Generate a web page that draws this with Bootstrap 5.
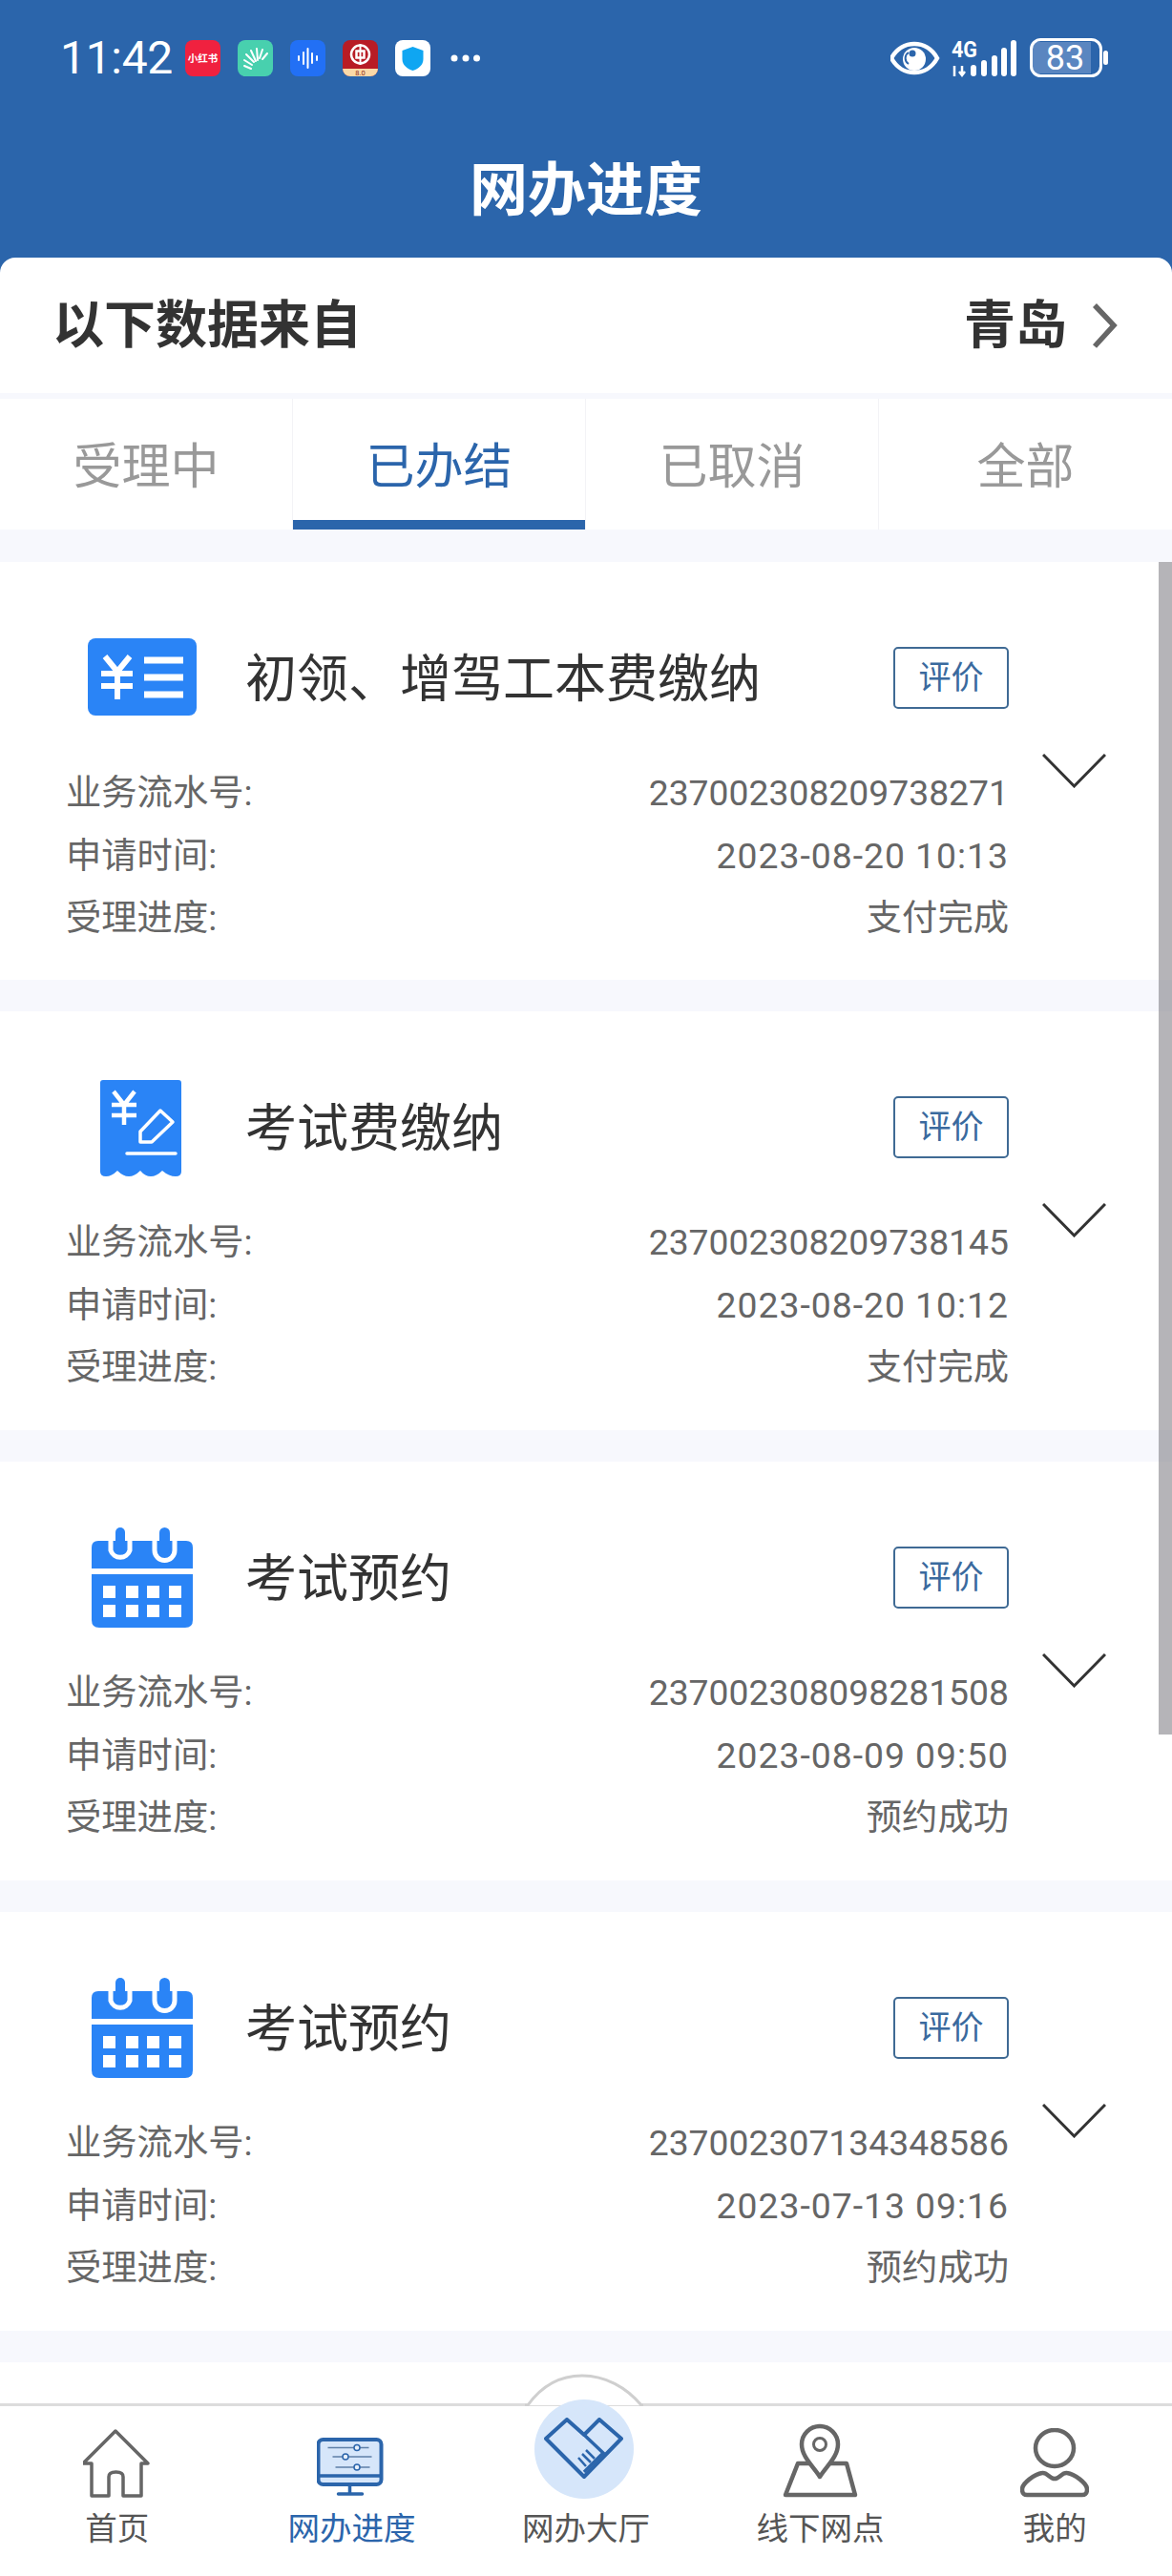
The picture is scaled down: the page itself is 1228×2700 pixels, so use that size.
<!DOCTYPE html>
<html lang="zh-CN">
  <head>
    <meta charset="UTF-8" />
    <meta name="viewport" content="width=device-width, initial-scale=1.0" />
    <title>网办进度</title>
    <link href="https://cdn.jsdelivr.net/npm/bootstrap@5.3.0/dist/css/bootstrap.min.css" rel="stylesheet" />
    <style>
      body {
        font-family: Roboto, "Noto Sans CJK SC", sans-serif;
        background-color: #f7f8fd;
        overflow: hidden;
      }

      .page-wrap { height: 2700px; overflow: hidden; }

      /* Header */
      .top-head { height: 270px; background-color: #2b65ab; color: #fff; }
      .status-row { height: 42px; padding: 0 67px 0 63px; margin-top: 40px; }
      .status-time { width: 131px; font-size: 48px; line-height: 42px; letter-spacing: -0.3px; }
      .app-gap { gap: 18px; }
      .more-dots { margin-left: 21px; }
      .page-title { font-size: 61px; line-height: 84px; font-weight: 700; margin-top: 76px; }

      /* Region bar */
      .region-back { background-color: #2b65ab; }
      .region-bar {
        height: 142px;
        padding: 0 56px 0 55px;
        background-color: #fff;
        border-radius: 16px 16px 0 0;
        font-size: 54px;
        font-weight: 700;
        color: #333;
      }

      /* Tabs */
      .state-tabs { margin-top: 6px; height: 137px; background-color: #fff; }
      .state-tabs .nav-item { width: 25%; border-right: 1px solid #f3f3f6; }
      .state-tabs .nav-item:last-child { border-right: 0; }
      .state-tabs .nav-link {
        height: 137px;
        padding: 0;
        font-size: 51px;
        line-height: 143px;
        color: #999;
        border-bottom: 10px solid transparent;
        border-radius: 0;
      }
      .state-tabs .nav-link.active { color: #2b65ab; border-bottom-color: #2b65ab; }

      /* Record list */
      .record-list { margin-top: 34px; min-height: 0; }
      .record-box { height: 439px; margin-bottom: 33px; padding-left: 69px; background-color: #fff; }
      .record-box:first-child { height: 438px; }
      .record-main { width: 988px; }
      .record-head { height: 146px; margin-top: 48px; margin-left: 11px; margin-bottom: 16px; }
      .record-head svg { flex: none; align-self: flex-start; }
      .record-title { margin-left: 37px; padding-top: 6px; font-size: 54px; line-height: 70px; color: #333; }
      .rate-btn {
        width: 121px;
        height: 65px;
        padding: 0;
        font-size: 34px;
        line-height: 60px;
        color: #3a6a9e;
        background: #fff;
        border: 2px solid #3f6a94;
        border-radius: 5px;
      }
      .info-row { height: 65.5px; font-size: 37.3px; line-height: 65.5px; color: #666; }
      .info-time { letter-spacing: 1px; }
      .fold-arrow { margin: 201px 0 0 35px; }
      .scroll-thumb {
        position: absolute;
        top: 0;
        right: 0;
        width: 14px;
        height: 1229px;
        background-color: rgba(107, 105, 113, 0.5);
      }

      /* Bottom nav */
      .foot-nav { height: 181px; background-color: #fff; border-top: 3px solid #dcdcdc; }
      .foot-item { width: 20%; padding-top: 18px; font-size: 33.5px; line-height: 42px; color: #555; }
      .foot-item.current { color: #2b65ab; }
      .foot-icon { height: 78px; margin-bottom: 12px; }
      .foot-arc { position: absolute; left: 59px; top: -34px; }
      .foot-disc {
        position: absolute;
        left: 69px;
        top: -7px;
        width: 104px;
        height: 104px;
        border-radius: 50%;
        background-color: #d6e6fa;
      }
    </style>
  </head>

  <body>
    <div class="page-wrap d-flex flex-column">
      <!-- Header -->
      <header class="top-head flex-shrink-0">
        <div class="status-row d-flex align-items-center">
          <div class="status-time">11:42</div>
          <div class="d-flex align-items-center app-gap">
            <svg width="37" height="38" viewBox="0 0 37 38">
              <rect width="37" height="38" rx="8" fill="#f0213f" />
              <text x="18.500" y="23" text-anchor="middle" font-size="10.500" font-weight="700" fill="#fff">小红书</text>
            </svg>
            <svg width="37" height="38" viewBox="0 0 37 38">
              <rect width="37" height="38" rx="8" fill="#48d0ae" />
              <g stroke="#fff" stroke-width="2" stroke-linecap="round">
                <path d="M7 27l7 3M7 21l8 5M9 15l8 8M14 11l5 11M20 9l1 12M26 10l-3 9M31 14l-5 6" />
              </g>
            </svg>
            <svg width="37" height="38" viewBox="0 0 37 38">
              <rect width="37" height="38" rx="8" fill="#2270f5" />
              <g stroke="#fff" stroke-width="2" stroke-linecap="round">
                <path d="M9 17v4M14 13v12M18.500 9v20M23 14v10M28 17v4" />
              </g>
            </svg>
            <svg width="37" height="38" viewBox="0 0 37 38">
              <rect width="37" height="38" rx="8" fill="#b81c25" />
              <path d="M0 30h37v0a8 8 0 0 1-8 8H8a8 8 0 0 1-8-8z" fill="#fbd9a8" />
              <circle cx="18.500" cy="15" r="9.500" fill="none" stroke="#fff" stroke-width="2.500" />
              <rect x="14.500" y="11.500" width="8" height="7" fill="none" stroke="#fff" stroke-width="2.500" />
              <path d="M18.500 4v22" stroke="#fff" stroke-width="2" />
              <text x="18.500" y="36.500" text-anchor="middle" font-size="7.500" fill="#8a2a12">8.0</text>
            </svg>
            <svg width="37" height="38" viewBox="0 0 37 38">
              <rect width="37" height="38" rx="8" fill="#fff" />
              <path d="M18.500 7l11 4v9c0 6-5 10-11 12-6-2-11-6-11-12v-9z" fill="#0fa6f2" />
            </svg>
          </div>
          <svg class="more-dots" width="32" height="10" viewBox="0 0 32 10">
            <circle cx="4" cy="5" r="3.500" fill="#fff" />
            <circle cx="16" cy="5" r="3.500" fill="#fff" />
            <circle cx="27.500" cy="5" r="3.500" fill="#fff" />
          </svg>
          <svg class="ms-auto" width="228" height="42" viewBox="933 40 228 42">
            <path d="M934 61C945 41 971 41 982 61 971 81 945 81 934 61Z" fill="none" stroke="#fff" stroke-width="4.500" />
            <circle cx="958" cy="62" r="12" fill="#fff" />
            <path d="M952 55a7 7 0 0 0 0 12" fill="none" stroke="#2b65ab" stroke-width="2" />
            <circle cx="956" cy="56" r="3.500" fill="#2b65ab" />
            <text x="997" y="60" font-size="24" font-weight="700" fill="#fff" textLength="27" lengthAdjust="spacingAndGlyphs">4G</text>
            <path d="M1000 69v11M1008 69v10M1005 75l3 4 3-4" fill="none" stroke="#fff" stroke-width="2.500" />
            <g fill="#fff">
              <rect x="1017" y="68" width="6" height="12" rx="3" />
              <rect x="1028" y="63" width="6" height="17" rx="3" />
              <rect x="1039" y="58" width="6" height="22" rx="3" />
              <rect x="1049" y="50" width="6" height="30" rx="3" />
              <rect x="1059" y="42" width="6" height="38" rx="3" />
            </g>
            <path d="M1086 44h57v33h-57a4 4 0 0 1-4-4v-25a4 4 0 0 1 4-4z" fill="#5a86c0" />
            <rect x="1080.500" y="41.500" width="73" height="38" rx="10" fill="none" stroke="#fff" stroke-width="3" />
            <rect x="1156" y="53" width="5" height="15" rx="2.500" fill="#fff" />
            <text x="1116" y="73" text-anchor="middle" font-size="36" fill="#fff">83</text>
          </svg>
        </div>
        <h1 class="page-title text-center mb-0">网办进度</h1>
      </header>

      <!-- Region -->
      <div class="region-back flex-shrink-0">
        <div class="region-bar d-flex align-items-center justify-content-between">
          <span>以下数据来自</span>
          <span class="d-flex align-items-center">
            青岛
            <svg class="ms-4" width="30" height="48" viewBox="0 0 30 48">
              <path d="M5 3l20 21L5 46" fill="none" stroke="#666" stroke-width="5.500" />
            </svg>
          </span>
        </div>
      </div>

      <!-- Tabs -->
      <ul class="nav state-tabs flex-shrink-0 text-center">
        <li class="nav-item"><a class="nav-link" href="#">受理中</a></li>
        <li class="nav-item"><a class="nav-link active" href="#">已办结</a></li>
        <li class="nav-item"><a class="nav-link" href="#">已取消</a></li>
        <li class="nav-item"><a class="nav-link" href="#">全部</a></li>
      </ul>

      <!-- Records, filled in by the script below -->
      <div class="record-list flex-grow-1 position-relative overflow-hidden">
        <div id="recordList"></div>
        <div class="bg-white" style="height: 60px"></div>
        <div class="scroll-thumb"></div>
      </div>

      <!-- Bottom nav -->
      <nav class="foot-nav flex-shrink-0 d-flex text-center position-relative">
        <a class="foot-item text-decoration-none" href="#">
          <div class="foot-icon d-flex justify-content-center align-items-end">
            <svg width="72" height="72" viewBox="2 0 72 72">
              <path d="M36 2L2 36H11V70H29V50Q29 45 36.500 45 44 45 44 50V70H63V36H70Z" fill="none" stroke="#666" stroke-width="3.500" stroke-linejoin="round" />
            </svg>
          </div>
          首页
        </a>
        <a class="foot-item current text-decoration-none" href="#">
          <div class="foot-icon d-flex justify-content-center align-items-end">
            <svg width="72" height="66" viewBox="12.500 10 72 66">
              <rect x="14" y="15" width="66" height="47" rx="5" fill="#d6e6fa" stroke="#2b65ab" stroke-width="4" />
              <path d="M14 53H80" stroke="#2b65ab" stroke-width="3.500" />
              <path d="M47 62V71M35 72H60" stroke="#2b65ab" stroke-width="3.500" stroke-linecap="round" />
              <path d="M24 23.500H67M29 33H70M32 44H68" stroke="#5f80a8" stroke-width="1.500" />
              <circle cx="54.500" cy="23.500" r="3" fill="#e8f1fc" stroke="#2b65ab" stroke-width="1.500" />
              <circle cx="42.500" cy="33" r="3" fill="#e8f1fc" stroke="#2b65ab" stroke-width="1.500" />
              <circle cx="54.500" cy="44" r="3" fill="#e8f1fc" stroke="#2b65ab" stroke-width="1.500" />
            </svg>
          </div>
          网办进度
        </a>
        <a class="foot-item text-decoration-none position-relative" href="#">
          <svg class="foot-arc" width="124" height="34" viewBox="0 0 124 34">
            <path d="M0 33H3C18 12 38 2 60 2 84 2 106 14 122 33H124" fill="#fff" stroke="#cfcfcf" stroke-width="3" />
          </svg>
          <div class="foot-disc d-flex align-items-center justify-content-center">
            <svg width="84" height="66" viewBox="31 61 84 66">
              <path d="M33 83L55 63 73 79 89 63 112 83 73 123Z" fill="none" stroke="#2b65ab" stroke-width="4" stroke-linejoin="round" />
              <path d="M73 79L93 98 73 118" fill="none" stroke="#2b65ab" stroke-width="3.500" />
              <path d="M67 103L75 112M71 99L80 108M75 95L84 104" stroke="#2b65ab" stroke-width="2.500" />
            </svg>
          </div>
          <div class="foot-icon"></div>
          网办大厅
        </a>
        <a class="foot-item text-decoration-none" href="#">
          <div class="foot-icon d-flex justify-content-center align-items-end">
            <svg width="82" height="78" viewBox="0 0 82 78">
              <path d="M17 42H68L77 75H4Z" fill="none" stroke="#666" stroke-width="4.500" stroke-linejoin="round" />
              <path d="M40 56C33 45 21 35 21 22A19 19 0 0 1 59 22C59 35 47 45 40 56Z" fill="#fff" stroke="#666" stroke-width="4.500" stroke-linejoin="round" />
              <circle cx="40" cy="22" r="6.500" fill="none" stroke="#666" stroke-width="3" />
            </svg>
          </div>
          线下网点
        </a>
        <a class="foot-item text-decoration-none" href="#">
          <div class="foot-icon d-flex justify-content-center align-items-end">
            <svg width="72" height="73" viewBox="2 0 72 73">
              <ellipse cx="38" cy="21" rx="20" ry="19" fill="none" stroke="#666" stroke-width="4.500" />
              <path d="M38 53C33 53 30 46 25 47 17 48 4 58 4 64 4 69 6 70 9 70H67C70 70 72 69 72 64 72 58 59 48 51 47 46 46 43 53 38 53Z" fill="none" stroke="#666" stroke-width="4.500" />
            </svg>
          </div>
          我的
        </a>
      </nav>
    </div>

    <script src="https://cdn.jsdelivr.net/npm/bootstrap@5.3.0/dist/js/bootstrap.bundle.min.js"></script>
    <script>
      const BLUE = "#2a84f6";

      // Card icons, all drawn in the same 140x140 box
      const icons = {
        fee: `<rect x="12" y="32" width="114" height="81" rx="8" fill="${BLUE}" />
          <path d="M30 51L43 67 56 51M43 67V96M26 69H59M26 82H59" fill="none" stroke="#fff" stroke-width="6" />
          <path d="M71 55H112M71 73H112M71 91H112" stroke="#fff" stroke-width="7" />`,
        exam: `<path d="M25 27Q25 24 28 24H107Q110 24 110 27V120Q110 125 104 125 97 125 90 119 84 125 78 125 72 125 67 119 61 125 55 125 49 125 43 119 37 125 31 125 25 125 25 120Z" fill="${BLUE}" />
          <path d="M39 36L50 50 61 36M50 50V71M37 50H63M37 61H63" fill="none" stroke="#fff" stroke-width="4.500" />
          <path d="M67 89V78L88 56 101 68 79 89Z" fill="none" stroke="#fff" stroke-width="3.500" stroke-linejoin="round" />
          <path d="M53 101H104" stroke="#fff" stroke-width="3.500" stroke-linecap="round" />`,
        book: `<path d="M16 42Q16 35 23 35H115Q122 35 122 42V64H16ZM16 70H122V118Q122 126 114 126H24Q16 126 16 118Z" fill="${BLUE}" />
          <g fill="none" stroke="#fff" stroke-width="5"><path d="M36 30V45A10.500 10.500 0 0 0 56 45V30M82 30V45A10.500 10.500 0 0 0 103 45V30" /></g>
          <rect x="41" y="21" width="10" height="27" rx="5" fill="${BLUE}" />
          <rect x="87" y="21" width="11" height="27" rx="5.500" fill="${BLUE}" />
          <g fill="#fff">
            <rect x="28" y="82" width="13" height="13" /><rect x="52" y="82" width="13" height="13" />
            <rect x="74" y="82" width="13" height="13" /><rect x="97" y="82" width="13" height="13" />
            <rect x="28" y="102" width="13" height="13" /><rect x="52" y="102" width="13" height="13" />
            <rect x="74" y="102" width="13" height="13" /><rect x="97" y="102" width="13" height="13" />
          </g>`,
      };

      const records = [
        { icon: "fee", title: "初领、增驾工本费缴纳", no: "237002308209738271", time: "2023-08-20 10:13", state: "支付完成" },
        { icon: "exam", title: "考试费缴纳", no: "237002308209738145", time: "2023-08-20 10:12", state: "支付完成" },
        { icon: "book", title: "考试预约", no: "237002308098281508", time: "2023-08-09 09:50", state: "预约成功" },
        { icon: "book", title: "考试预约", no: "237002307134348586", time: "2023-07-13 09:16", state: "预约成功" },
      ];

      document.getElementById("recordList").innerHTML = records
        .map(
          (r) => `
        <div class="record-box d-flex">
          <div class="record-main">
            <div class="record-head d-flex align-items-center">
              <svg width="140" height="140" viewBox="0 0 140 140">${icons[r.icon]}</svg>
              <div class="record-title flex-grow-1">${r.title}</div>
              <button class="btn rate-btn" type="button">评价</button>
            </div>
            <div class="info-row d-flex justify-content-between"><span>业务流水号:</span><span>${r.no}</span></div>
            <div class="info-row d-flex justify-content-between"><span>申请时间:</span><span class="info-time">${r.time}</span></div>
            <div class="info-row d-flex justify-content-between"><span>受理进度:</span><span>${r.state}</span></div>
          </div>
          <svg class="fold-arrow" width="67" height="36" viewBox="0 0 67 36">
            <path d="M1 1L33.500 34 66 1" fill="none" stroke="#333" stroke-width="3" />
          </svg>
        </div>`
        )
        .join("");
    </script>
  </body>
</html>
